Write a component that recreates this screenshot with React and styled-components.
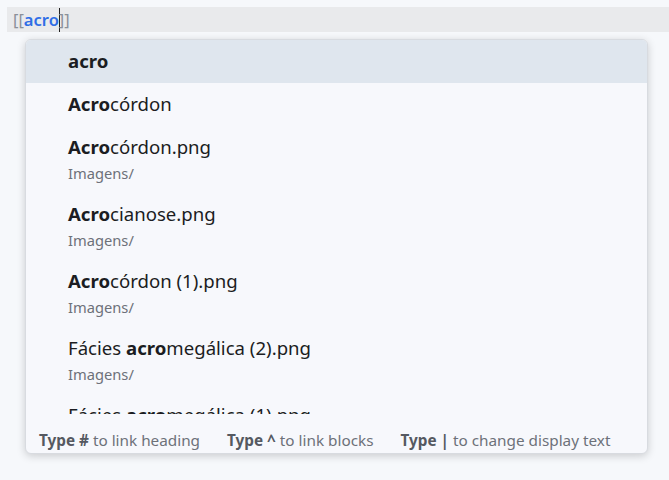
import React from "react";
import styled, { createGlobalStyle } from "styled-components";

const GlobalStyle = createGlobalStyle`
  html, body {
    margin: 0;
    padding: 0;
    background: #f6f8fb;
    font-family: "Noto Sans", "Open Sans", sans-serif;
  }
`;

const results = [
  { id: 1, parts: [["acro", true]], path: null, selected: true },
  { id: 2, parts: [["Acro", true], ["córdon", false]], path: null },
  { id: 3, parts: [["Acro", true], ["córdon.png", false]], path: "Imagens/" },
  { id: 4, parts: [["Acro", true], ["cianose.png", false]], path: "Imagens/" },
  { id: 5, parts: [["Acro", true], ["córdon (1).png", false]], path: "Imagens/" },
  { id: 6, parts: [["Fácies ", false], ["acro", true], ["megálica (2).png", false]], path: "Imagens/" },
  { id: 7, parts: [["Fácies ", false], ["acro", true], ["megálica (1).png", false]], path: "Imagens/" },
];

const hints = [
  { key: "Type #", text: "to link heading" },
  { key: "Type ^", text: "to link blocks" },
  { key: "Type |", text: "to change display text" },
];

const Page = styled.div`
  padding-top: 7px;
  width: 669px;
  height: 480px;
  box-sizing: border-box;
  overflow: hidden;
`;

const EditorLine = styled.div`
  margin-left: 7px;
  height: 25px;
  background: #e9eaec;
  display: flex;
  align-items: center;
  padding-left: 6px;
  font-size: 16.5px;
`;

const Bracket = styled.span`
  color: #8b9099;
`;

const LinkText = styled.span`
  color: #2f6ee6;
  font-weight: 600;
`;

const Caret = styled.span`
  display: inline-block;
  width: 1px;
  height: 24px;
  background: #222;
  margin: 0 -1px 0 0;
`;

const Popup = styled.div`
  margin: 7px 0 0 25px;
  width: 623px;
  height: 415px;
  background: #f7f8fc;
  border: 1px solid #d8dbe0;
  border-radius: 6px;
  box-shadow: 0 2px 8px rgba(0, 0, 0, 0.18);
  box-sizing: border-box;
  display: flex;
  flex-direction: column;
  overflow: hidden;
`;

const List = styled.div`
  height: 374px;
  overflow: hidden;
  flex-shrink: 0;
`;

const Item = styled.div`
  padding: 8px 0 8px 42px;
  background: ${(p) => (p.$selected ? "#dfe6ee" : "transparent")};
`;

const Title = styled.div`
  font-size: 18.6px;
  line-height: 26px;
  padding-bottom: 1px;
  color: #1b1d22;
  white-space: nowrap;
`;

const Match = styled.b`
  font-weight: 700;
`;

const Path = styled.div`
  font-size: 14.7px;
  line-height: 24px;
  color: #6d7179;
`;

const Footer = styled.div`
  flex: 1;
  display: flex;
  align-items: center;
  gap: 27px;
  padding: 13px 0 0 13px;
  font-size: 15.3px;
  color: #6d7179;
  white-space: nowrap;
`;

const Hint = styled.span`
  b {
    font-weight: 700;
    color: #555961;
  }
`;

export default function App() {
  return (
    <Page>
      <GlobalStyle />
      <EditorLine>
        <Bracket>[[</Bracket>
        <LinkText>acro</LinkText>
        <Caret />
        <Bracket>]]</Bracket>
      </EditorLine>
      <Popup>
        <List>
          {results.map((r) => (
            <Item key={r.id} $selected={r.selected}>
              <Title>
                {r.parts.map(([t, bold], i) =>
                  bold ? <Match key={i}>{t}</Match> : <span key={i}>{t}</span>
                )}
              </Title>
              {r.path && <Path>{r.path}</Path>}
            </Item>
          ))}
        </List>
        <Footer>
          {hints.map((h) => (
            <Hint key={h.key}>
              <b>{h.key}</b> {h.text}
            </Hint>
          ))}
        </Footer>
      </Popup>
    </Page>
  );
}
